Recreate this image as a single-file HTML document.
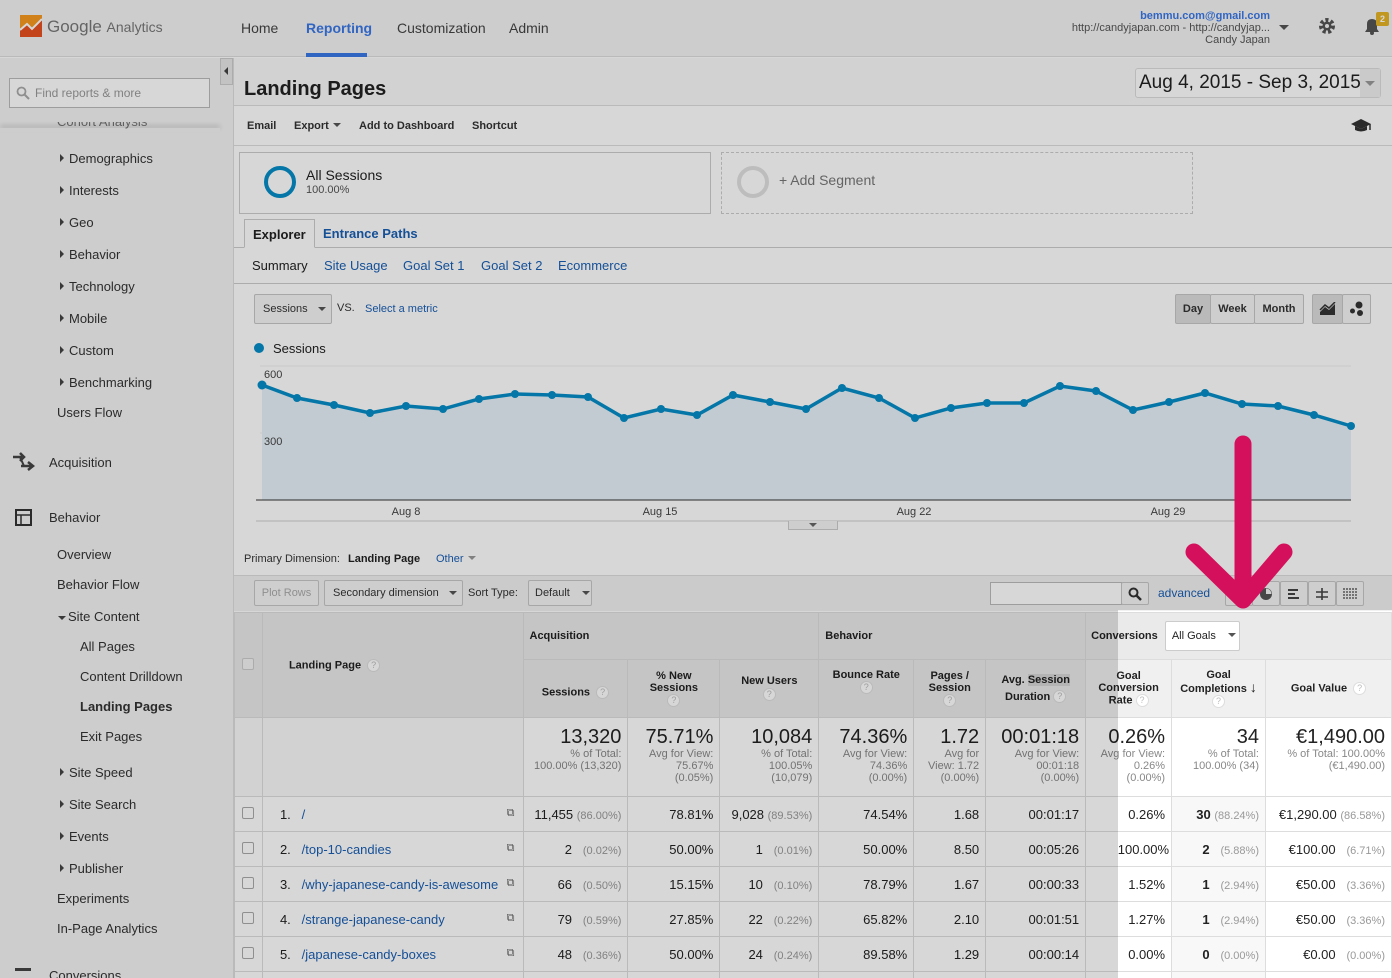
<!DOCTYPE html>
<html style="width:1392px;height:978px;overflow:hidden"><head><meta charset="utf-8">
<style>
*{box-sizing:border-box;margin:0;padding:0}
body{width:1392px;height:978px;overflow:hidden;position:relative;font-family:"Liberation Sans",Arial,sans-serif;color:#222;background:#fff}
.a{position:absolute;white-space:nowrap}
.b{font-weight:bold}
.lk{color:#1a5fb4}
.sb{font-size:13px;color:#333}
.tri{display:inline-block;width:0;height:0;border-left:4px solid #444;border-top:4px solid transparent;border-bottom:4px solid transparent;margin-right:5px;vertical-align:1px}
.trd{display:inline-block;width:0;height:0;border-top:4px solid #555;border-left:4px solid transparent;border-right:4px solid transparent;margin-left:6px;vertical-align:2px}
.btn{position:absolute;border:1px solid #c6c6c6;border-radius:2px;background:#f5f5f5;font-size:11px;color:#333;display:flex;align-items:center;justify-content:center}
.tw{position:absolute;left:234px;top:612px;width:1158px;height:366px;overflow:hidden}
table{border-collapse:collapse;table-layout:fixed;font-size:13px}
td,th{border:1px solid #ddd;overflow:hidden}
th{background:#eaeaea;font-size:11px;font-weight:bold;color:#222}
.q{display:inline-block;width:13px;height:13px;border-radius:50%;background:#fff;border:1px solid #ddd;color:#bbb;font-size:9px;line-height:11px;text-align:center;font-weight:normal;vertical-align:middle}
.tot td{background:#fff;text-align:right;padding:8px 6px 0 4px;vertical-align:top;color:#888;font-size:11px;line-height:12px}
.tot .big{font-size:20px;color:#222;line-height:22px;display:block}
.r td{height:35px;text-align:right;padding:0 6px;background:#fff}
.r .p{color:#999;font-size:11px}
.cb{display:inline-block;width:12px;height:12px;border:1px solid #aaa;border-radius:2px;background:#fff}
.sc{background:#f8f8f8!important}
.ov{position:absolute;background:rgba(0,0,0,0.155);z-index:5}
</style></head><body>

<!-- top bar -->
<div class="a" style="left:0;top:0;width:1392px;height:57px;background:#f4f4f4;border-bottom:1px solid #ddd"></div>
<svg class="a" style="left:20px;top:15px" width="22" height="22"><rect width="22" height="22" fill="#f79a1e"/><polygon points="0,22 0,14 7,8 12,13 22,3 22,22" fill="#e8501f"/><polyline points="0,15 7,9 12,14 22,4" stroke="#fff" stroke-width="2" fill="none"/></svg>
<div class="a" style="left:47px;top:17px;font-size:17px;color:#777">Google <span style="font-size:14px">Analytics</span></div>
<div class="a" style="left:241px;top:20px;font-size:14px;color:#444">Home</div>
<div class="a b" style="left:306px;top:20px;font-size:14px;color:#3b78e7">Reporting</div>
<div class="a" style="left:306px;top:53px;width:61px;height:4px;background:#3b78e7"></div>
<div class="a" style="left:397px;top:20px;font-size:14px;color:#444">Customization</div>
<div class="a" style="left:509px;top:20px;font-size:14px;color:#444">Admin</div>
<div class="a b" style="right:122px;top:10px;font-size:11px;color:#3b78e7">bemmu.com@gmail.com</div>
<div class="a" style="right:122px;top:22px;font-size:11px;color:#555">http://candyjapan.com - http://candyjap...</div>
<div class="a" style="right:122px;top:34px;font-size:11px;color:#555">Candy Japan</div>
<div class="a" style="left:1279px;top:25px;border-top:5px solid #555;border-left:5px solid transparent;border-right:5px solid transparent"></div>
<svg class="a" style="left:1318px;top:17px" width="18" height="18" viewBox="0 0 18 18"><circle cx="9" cy="9" r="6" fill="none" stroke="#555" stroke-width="4" stroke-dasharray="3 2.3"/><circle cx="9" cy="9" r="4.5" fill="#555"/><circle cx="9" cy="9" r="2" fill="#f4f4f4"/></svg>
<svg class="a" style="left:1362px;top:16px" width="20" height="20" viewBox="0 0 20 20"><path d="M3 16 L5 13 L5 8 Q5 3 10 3 Q15 3 15 8 L15 13 L17 16 Z" fill="#555"/><circle cx="10" cy="17" r="2" fill="#555"/></svg>
<div class="a b" style="left:1376px;top:12px;width:13px;height:14px;background:#e5b325;color:#fff;font-size:9px;text-align:center;line-height:14px;border-radius:2px">2</div>

<!-- sidebar -->
<div class="a" style="left:0;top:58px;width:233px;height:920px;background:#f3f3f3"></div>
<div class="a" style="left:220px;top:58px;width:13px;height:27px;background:#e8e8e8;border:1px solid #ccc"></div>
<div class="a" style="left:224px;top:67px;border-right:4px solid #444;border-top:4px solid transparent;border-bottom:4px solid transparent"></div>
<div class="a" style="left:9px;top:78px;width:201px;height:30px;border:1px solid #bbb;background:#fff"></div>
<svg class="a" style="left:16px;top:86px" width="14" height="14"><circle cx="5.5" cy="5.5" r="4" fill="none" stroke="#aaa" stroke-width="1.8"/><line x1="8.5" y1="8.5" x2="13" y2="13" stroke="#aaa" stroke-width="2"/></svg>
<div class="a" style="left:35px;top:86px;font-size:12px;color:#999">Find reports &amp; more</div>
<div class="a" style="left:57px;top:122px;width:160px;height:8px;overflow:hidden"><div class="sb" style="margin-top:-8px;color:#777">Cohort Analysis</div></div>
<div class="a" style="left:0;top:128px;width:220px;height:4px;box-shadow:0 -3px 5px rgba(0,0,0,.12)"></div>
<div class="a sb" style="left:60px;top:151px"><span class="tri"></span>Demographics</div>
<div class="a sb" style="left:60px;top:183px"><span class="tri"></span>Interests</div>
<div class="a sb" style="left:60px;top:215px"><span class="tri"></span>Geo</div>
<div class="a sb" style="left:60px;top:247px"><span class="tri"></span>Behavior</div>
<div class="a sb" style="left:60px;top:279px"><span class="tri"></span>Technology</div>
<div class="a sb" style="left:60px;top:311px"><span class="tri"></span>Mobile</div>
<div class="a sb" style="left:60px;top:343px"><span class="tri"></span>Custom</div>
<div class="a sb" style="left:60px;top:375px"><span class="tri"></span>Benchmarking</div>
<div class="a sb" style="left:57px;top:405px">Users Flow</div>
<svg class="a" style="left:12px;top:452px" width="24" height="22"><path d="M1 5 H10 M8 1 L12 5 L8 9" stroke="#444" stroke-width="2.5" fill="none"/><path d="M9 14 H19 M16 10 L21 14 L16 18" stroke="#444" stroke-width="2.5" fill="none"/><path d="M8 5 L12 14" stroke="#444" stroke-width="2"/></svg>
<div class="a" style="left:49px;top:455px;font-size:13px;color:#333">Acquisition</div>
<svg class="a" style="left:15px;top:509px" width="18" height="18"><rect x="1" y="1" width="15" height="15" fill="none" stroke="#333" stroke-width="2"/><line x1="1" y1="6" x2="16" y2="6" stroke="#333" stroke-width="1.5"/><line x1="6" y1="6" x2="6" y2="16" stroke="#333" stroke-width="1.5"/></svg>
<div class="a" style="left:49px;top:510px;font-size:13px;color:#333">Behavior</div>
<div class="a sb" style="left:57px;top:547px">Overview</div>
<div class="a sb" style="left:57px;top:577px">Behavior Flow</div>
<div class="a sb" style="left:58px;top:609px"><span class="tri" style="border-left:4px solid transparent;border-right:4px solid transparent;border-top:4px solid #444;border-bottom:0;margin-right:2px"></span>Site Content</div>
<div class="a sb" style="left:80px;top:639px">All Pages</div>
<div class="a sb" style="left:80px;top:669px">Content Drilldown</div>
<div class="a sb b" style="left:80px;top:699px">Landing Pages</div>
<div class="a sb" style="left:80px;top:729px">Exit Pages</div>
<div class="a sb" style="left:60px;top:765px"><span class="tri"></span>Site Speed</div>
<div class="a sb" style="left:60px;top:797px"><span class="tri"></span>Site Search</div>
<div class="a sb" style="left:60px;top:829px"><span class="tri"></span>Events</div>
<div class="a sb" style="left:60px;top:861px"><span class="tri"></span>Publisher</div>
<div class="a sb" style="left:57px;top:891px">Experiments</div>
<div class="a sb" style="left:57px;top:921px">In-Page Analytics</div>
<div class="a" style="left:49px;top:968px;font-size:13px;color:#333">Conversions</div>
<div class="a" style="left:15px;top:968px;width:16px;height:10px;border-top:3px solid #444"></div>

<!-- main -->
<div class="a" style="left:233px;top:58px;width:1px;height:920px;background:#ddd"></div>
<div class="a" style="left:234px;top:58px;width:1158px;height:48px;background:#fafafa;border-bottom:1px solid #ddd"></div>
<div class="a b" style="left:244px;top:78px;font-size:20px;color:#222">Landing Pages</div>
<div class="a" style="left:1135px;top:68px;width:246px;height:30px;border:1px solid #ddd;border-radius:3px;background:#fff"></div>
<div class="a" style="left:1360px;top:69px;width:20px;height:28px;background:#f0f0f0"></div>
<div class="a" style="left:1365px;top:81px;border-top:5px solid #999;border-left:5px solid transparent;border-right:5px solid transparent"></div>
<div class="a" style="left:1139px;top:72px;font-size:19px;color:#222">Aug 4, 2015 - Sep 3, 2015</div>
<div class="a b" style="left:247px;top:120px;font-size:11px;color:#333">Email</div>
<div class="a b" style="left:294px;top:120px;font-size:11px;color:#333">Export<span class="trd" style="margin-left:4px"></span></div>
<div class="a b" style="left:359px;top:120px;font-size:11px;color:#333">Add to Dashboard</div>
<div class="a b" style="left:472px;top:120px;font-size:11px;color:#333">Shortcut</div>
<svg class="a" style="left:1350px;top:118px" width="22" height="16"><polygon points="11,1 21,6 11,11 1,6" fill="#333"/><path d="M5 8 V12 Q11 15 17 12 V8 L11 11Z" fill="#333"/><line x1="20" y1="6" x2="20" y2="12" stroke="#333" stroke-width="1.5"/></svg>
<div class="a" style="left:234px;top:145px;width:1158px;height:1px;background:#ddd"></div>

<div class="a" style="left:239px;top:152px;width:472px;height:62px;border:1px solid #ccc;background:#fff"></div>
<div class="a" style="left:264px;top:166px;width:32px;height:32px;border-radius:50%;border:4px solid #058dc7"></div>
<div class="a" style="left:306px;top:167px;font-size:14px;color:#222">All Sessions</div>
<div class="a" style="left:306px;top:184px;font-size:11px;color:#555">100.00%</div>
<div class="a" style="left:721px;top:152px;width:472px;height:62px;border:1px dashed #ccc"></div>
<div class="a" style="left:737px;top:166px;width:32px;height:32px;border-radius:50%;border:4px solid #e0e0e0"></div>
<div class="a" style="left:779px;top:172px;font-size:14px;color:#777">+ Add Segment</div>

<div class="a" style="left:234px;top:247px;width:1158px;height:1px;background:#ccc"></div>
<div class="a b" style="left:244px;top:219px;width:71px;height:29px;border:1px solid #ccc;border-bottom:1px solid #fff;background:#fff;font-size:13px;padding:7px 0 0 8px">Explorer</div>
<div class="a b lk" style="left:323px;top:226px;font-size:13px">Entrance Paths</div>
<div class="a" style="left:252px;top:258px;font-size:13px">Summary</div>
<div class="a lk" style="left:324px;top:258px;font-size:13px">Site Usage</div>
<div class="a lk" style="left:403px;top:258px;font-size:13px">Goal Set 1</div>
<div class="a lk" style="left:481px;top:258px;font-size:13px">Goal Set 2</div>
<div class="a lk" style="left:558px;top:258px;font-size:13px">Ecommerce</div>
<div class="a" style="left:234px;top:283px;width:1158px;height:1px;background:#ccc"></div>

<div class="btn" style="left:254px;top:294px;width:78px;height:30px;justify-content:flex-start;padding-left:8px">Sessions<span class="trd" style="margin-left:10px"></span></div>
<div class="a" style="left:337px;top:302px;font-size:11px;color:#333">VS.</div>
<div class="a lk" style="left:365px;top:303px;font-size:11px">Select a metric</div>
<div class="btn b" style="left:1175px;top:294px;width:36px;height:30px;background:#ddd">Day</div>
<div class="btn b" style="left:1210px;top:294px;width:45px;height:30px">Week</div>
<div class="btn b" style="left:1254px;top:294px;width:50px;height:30px">Month</div>
<div class="btn" style="left:1312px;top:294px;width:31px;height:30px;background:#ddd"><svg width="18" height="14"><path d="M1 13 L1 10 L6 5 L10 8 L16 2 L16 13Z" fill="#333"/><path d="M1 8 L6 3 L10 6 L16 0" stroke="#333" stroke-width="1.5" fill="none"/></svg></div>
<div class="btn" style="left:1342px;top:294px;width:29px;height:30px"><svg width="16" height="16"><circle cx="10" cy="4" r="3.5" fill="#333"/><circle cx="3.5" cy="10" r="2.5" fill="#333"/><circle cx="11" cy="12" r="3" fill="#333"/></svg></div>

<div class="a" style="left:254px;top:343px;width:10px;height:10px;border-radius:50%;background:#058dc7"></div>
<div class="a" style="left:273px;top:341px;font-size:13px">Sessions</div>
<svg class="a" style="left:250px;top:360px" width="1110" height="170" viewBox="250 360 1110 170">
<line x1="260" y1="366" x2="1351" y2="366" stroke="#eee"/>
<line x1="260" y1="433" x2="1351" y2="433" stroke="#eee"/>
<polygon fill="#e6f1f8" points="262,500 262,385 297,398 334,405 370,413 406,406 443,409 479,399 515,394 552,395 588,397 624,418 661,409 697,415 733,395 770,402 806,409 842,388 879,398 915,418 951,408 987,403 1024,403 1060,386 1096,391 1133,410 1169,402 1205,393 1242,404 1278,406 1314,415 1351,426 1351,500"/>
<polyline fill="none" stroke="#058dc7" stroke-width="3.5" points="262,385 297,398 334,405 370,413 406,406 443,409 479,399 515,394 552,395 588,397 624,418 661,409 697,415 733,395 770,402 806,409 842,388 879,398 915,418 951,408 987,403 1024,403 1060,386 1096,391 1133,410 1169,402 1205,393 1242,404 1278,406 1314,415 1351,426"/>
<g fill="#058dc7">
<circle cx="262" cy="385" r="4.5"/><circle cx="297" cy="398" r="4"/><circle cx="334" cy="405" r="4"/><circle cx="370" cy="413" r="4"/><circle cx="406" cy="406" r="4"/><circle cx="443" cy="409" r="4"/><circle cx="479" cy="399" r="4"/><circle cx="515" cy="394" r="4"/><circle cx="552" cy="395" r="4"/><circle cx="588" cy="397" r="4"/><circle cx="624" cy="418" r="4"/><circle cx="661" cy="409" r="4"/><circle cx="697" cy="415" r="4"/><circle cx="733" cy="395" r="4"/><circle cx="770" cy="402" r="4"/><circle cx="806" cy="409" r="4"/><circle cx="842" cy="388" r="4"/><circle cx="879" cy="398" r="4"/><circle cx="915" cy="418" r="4"/><circle cx="951" cy="408" r="4"/><circle cx="987" cy="403" r="4"/><circle cx="1024" cy="403" r="4"/><circle cx="1060" cy="386" r="4"/><circle cx="1096" cy="391" r="4"/><circle cx="1133" cy="410" r="4"/><circle cx="1169" cy="402" r="4"/><circle cx="1205" cy="393" r="4"/><circle cx="1242" cy="404" r="4"/><circle cx="1278" cy="406" r="4"/><circle cx="1314" cy="415" r="4"/><circle cx="1351" cy="426" r="4"/></g>
<line x1="256" y1="500" x2="1351" y2="500" stroke="#333" stroke-width="1"/>
<text x="264" y="378" font-size="11" fill="#444" font-family="Liberation Sans">600</text>
<text x="264" y="445" font-size="11" fill="#444" font-family="Liberation Sans">300</text>
<g font-size="11" fill="#444" font-family="Liberation Sans" text-anchor="middle"><text x="406" y="515">Aug 8</text><text x="660" y="515">Aug 15</text><text x="914" y="515">Aug 22</text><text x="1168" y="515">Aug 29</text></g>
<line x1="256" y1="521" x2="1351" y2="521" stroke="#ccc"/>
</svg>
<div class="a" style="left:788px;top:521px;width:50px;height:9px;border:1px solid #ccc;border-top:0;background:#f5f5f5"></div>
<div class="a" style="left:809px;top:523px;border-top:4px solid #666;border-left:4px solid transparent;border-right:4px solid transparent"></div>

<div class="a" style="left:244px;top:553px;font-size:11px;color:#333">Primary Dimension:</div>
<div class="a b" style="left:348px;top:553px;font-size:11px">Landing Page</div>
<div class="a lk" style="left:436px;top:553px;font-size:11px">Other<span class="trd" style="border-top-color:#999;margin-left:4px"></span></div>
<div class="a" style="left:234px;top:575px;width:1158px;height:36px;background:#f1f1f1;border-top:1px solid #ddd"></div>
<div class="btn" style="left:254px;top:580px;width:65px;height:26px;color:#aaa">Plot Rows</div>
<div class="btn" style="left:324px;top:580px;width:139px;height:26px;justify-content:flex-start;padding-left:8px">Secondary dimension<span class="trd" style="margin-left:10px"></span></div>
<div class="a" style="left:468px;top:587px;font-size:11px;color:#333">Sort Type:</div>
<div class="btn" style="left:528px;top:580px;width:64px;height:26px;justify-content:flex-start;padding-left:6px">Default<span class="trd" style="margin-left:12px"></span></div>
<div class="a" style="left:990px;top:582px;width:132px;height:23px;border:1px solid #bbb;background:#fff"></div>
<div class="btn" style="left:1121px;top:582px;width:28px;height:23px"><svg width="14" height="14"><circle cx="5.5" cy="5.5" r="4" fill="none" stroke="#333" stroke-width="2"/><line x1="8.5" y1="8.5" x2="13" y2="13" stroke="#333" stroke-width="2.5"/></svg></div>
<div class="a lk" style="left:1158px;top:586px;font-size:12px">advanced</div>
<div class="btn" style="left:1225px;top:581px;width:28px;height:25px"></div>
<div class="btn" style="left:1252px;top:581px;width:28px;height:25px"><svg width="14" height="14"><circle cx="7" cy="7" r="6" fill="#555"/><path d="M7 7 V1.5 A5.5 5.5 0 0 1 12.5 7Z" fill="#f5f5f5"/></svg></div>
<div class="btn" style="left:1280px;top:581px;width:28px;height:25px"><svg width="12" height="12"><rect y="1" width="10" height="2" fill="#444"/><rect y="5" width="7" height="2" fill="#444"/><rect y="9" width="11" height="2" fill="#444"/></svg></div>
<div class="btn" style="left:1308px;top:581px;width:28px;height:25px"><svg width="14" height="14"><path d="M1 5 H13 M1 10 H13 M7 1 V13" stroke="#444" stroke-width="1.6"/></svg></div>
<div class="btn" style="left:1336px;top:581px;width:28px;height:25px"><svg width="16" height="12"><path d="M1 1 H15 M2 3 V11 M5 3 V11 M8 3 V11 M11 3 V11 M14 3 V11" stroke="#444" stroke-width="1.2" stroke-dasharray="2 1"/></svg></div>

<!-- table -->
<div class="tw">
<table>
<colgroup><col style="width:28px"><col style="width:261px"><col style="width:105px"><col style="width:92px"><col style="width:99px"><col style="width:95px"><col style="width:72px"><col style="width:100px"><col style="width:86px"><col style="width:94px"><col style="width:126px"></colgroup>
<tr style="height:47px">
<th rowspan="2" style="vertical-align:middle"><span class="cb" style="background:#f4f4f4;border-color:#ccc"></span></th>
<th rowspan="2" style="text-align:left;padding-left:26px">Landing Page &nbsp;<span class="q">?</span></th>
<th colspan="3" style="text-align:left;padding-left:6px">Acquisition</th>
<th colspan="3" style="text-align:left;padding-left:6px">Behavior</th>
<th colspan="3" style="text-align:left;padding-left:5px">Conversions <span style="display:inline-block;margin-left:4px;width:75px;height:30px;border:1px solid #ccc;border-radius:2px;background:#fff;font-weight:normal;line-height:28px;padding-left:6px;text-align:left;vertical-align:middle">All Goals<span class="trd" style="margin-left:12px"></span></span></th>
</tr>
<tr style="height:58px">
<th style="padding-top:8px">Sessions &nbsp;<span class="q">?</span></th>
<th style="line-height:12px">% New<br>Sessions<br><span class="q">?</span></th>
<th style="line-height:13px">New Users<br><span class="q">?</span></th>
<th style="padding-bottom:14px">Bounce Rate<br><span class="q">?</span></th>
<th style="line-height:12px">Pages /<br>Session<br><span class="q">?</span></th>
<th style="line-height:17px">Avg. <span style="background:#d6d6d6">Session</span><br>Duration <span class="q">?</span></th>
<th style="line-height:12px;background:#f0f0f0">Goal<br>Conversion<br>Rate <span class="q">?</span></th>
<th style="line-height:12px;background:#f0f0f0">Goal<br>Completions <span style="font-size:14px">&#8595;</span><br><span class="q">?</span></th>
<th style="background:#f0f0f0">Goal Value &nbsp;<span class="q">?</span></th>
</tr>
<tr class="tot" style="height:79px">
<td style="background:#f9f9f9"></td><td style="background:#f9f9f9"></td>
<td><span class="big">13,320</span>% of Total:<br>100.00% (13,320)</td>
<td><span class="big">75.71%</span>Avg for View:<br>75.67%<br>(0.05%)</td>
<td><span class="big">10,084</span>% of Total:<br>100.05%<br>(10,079)</td>
<td><span class="big">74.36%</span>Avg for View:<br>74.36%<br>(0.00%)</td>
<td><span class="big">1.72</span>Avg for<br>View: 1.72<br>(0.00%)</td>
<td><span class="big">00:01:18</span>Avg for View:<br>00:01:18<br>(0.00%)</td>
<td><span class="big">0.26%</span>Avg for View:<br>0.26%<br>(0.00%)</td>
<td><span class="big">34</span>% of Total:<br>100.00% (34)</td>
<td><span class="big">€1,490.00</span>% of Total: 100.00%<br>(€1,490.00)</td>
</tr>
<tr class="r"><td style="text-align:center;padding:0"><span class="cb"></span></td><td style="text-align:left;padding-left:17px;position:relative">1. &nbsp;&nbsp;<span class="lk">/</span><span style="position:absolute;right:8px;top:10px;font-size:11px;color:#666">&#10697;</span></td><td>11,455 <span class="p">(86.00%)</span></td><td>78.81%</td><td>9,028 <span class="p">(89.53%)</span></td><td>74.54%</td><td>1.68</td><td>00:01:17</td><td>0.26%</td><td class="sc"><b>30</b> <span class="p">(88.24%)</span></td><td>€1,290.00 <span class="p">(86.58%)</span></td></tr>
<tr class="r"><td style="text-align:center;padding:0"><span class="cb"></span></td><td style="text-align:left;padding-left:17px;position:relative">2. &nbsp;&nbsp;<span class="lk">/top-10-candies</span><span style="position:absolute;right:8px;top:10px;font-size:11px;color:#666">&#10697;</span></td><td>2 &nbsp;&nbsp;<span class="p">(0.02%)</span></td><td>50.00%</td><td>1 &nbsp;&nbsp;<span class="p">(0.01%)</span></td><td>50.00%</td><td>8.50</td><td>00:05:26</td><td style="padding-right:2px">100.00%</td><td class="sc"><b>2</b> &nbsp;&nbsp;<span class="p">(5.88%)</span></td><td>€100.00 &nbsp;&nbsp;<span class="p">(6.71%)</span></td></tr>
<tr class="r"><td style="text-align:center;padding:0"><span class="cb"></span></td><td style="text-align:left;padding-left:17px;position:relative">3. &nbsp;&nbsp;<span class="lk">/why-japanese-candy-is-awesome</span><span style="position:absolute;right:8px;top:10px;font-size:11px;color:#666">&#10697;</span></td><td>66 &nbsp;&nbsp;<span class="p">(0.50%)</span></td><td>15.15%</td><td>10 &nbsp;&nbsp;<span class="p">(0.10%)</span></td><td>78.79%</td><td>1.67</td><td>00:00:33</td><td>1.52%</td><td class="sc"><b>1</b> &nbsp;&nbsp;<span class="p">(2.94%)</span></td><td>€50.00 &nbsp;&nbsp;<span class="p">(3.36%)</span></td></tr>
<tr class="r"><td style="text-align:center;padding:0"><span class="cb"></span></td><td style="text-align:left;padding-left:17px;position:relative">4. &nbsp;&nbsp;<span class="lk">/strange-japanese-candy</span><span style="position:absolute;right:8px;top:10px;font-size:11px;color:#666">&#10697;</span></td><td>79 &nbsp;&nbsp;<span class="p">(0.59%)</span></td><td>27.85%</td><td>22 &nbsp;&nbsp;<span class="p">(0.22%)</span></td><td>65.82%</td><td>2.10</td><td>00:01:51</td><td>1.27%</td><td class="sc"><b>1</b> &nbsp;&nbsp;<span class="p">(2.94%)</span></td><td>€50.00 &nbsp;&nbsp;<span class="p">(3.36%)</span></td></tr>
<tr class="r"><td style="text-align:center;padding:0"><span class="cb"></span></td><td style="text-align:left;padding-left:17px;position:relative">5. &nbsp;&nbsp;<span class="lk">/japanese-candy-boxes</span><span style="position:absolute;right:8px;top:10px;font-size:11px;color:#666">&#10697;</span></td><td>48 &nbsp;&nbsp;<span class="p">(0.36%)</span></td><td>50.00%</td><td>24 &nbsp;&nbsp;<span class="p">(0.24%)</span></td><td>89.58%</td><td>1.29</td><td>00:00:14</td><td>0.00%</td><td class="sc"><b>0</b> &nbsp;&nbsp;<span class="p">(0.00%)</span></td><td>€0.00 &nbsp;&nbsp;<span class="p">(0.00%)</span></td></tr>
<tr class="r"><td></td><td></td><td></td><td></td><td></td><td></td><td></td><td></td><td></td><td class="sc"></td><td></td></tr>
</table>
</div>

<!-- dim overlays -->
<div class="ov" style="left:0;top:0;width:1392px;height:610px"></div>
<div class="ov" style="left:0;top:610px;width:1118px;height:368px"></div>

<!-- arrow -->
<svg class="a" style="left:1180px;top:430px;z-index:6" width="120" height="180"><path d="M63 14 V168 M14 122 L63 170 L104 122" stroke="#d4105c" stroke-width="17" stroke-linecap="round" stroke-linejoin="round" fill="none"/></svg>
</body></html>
